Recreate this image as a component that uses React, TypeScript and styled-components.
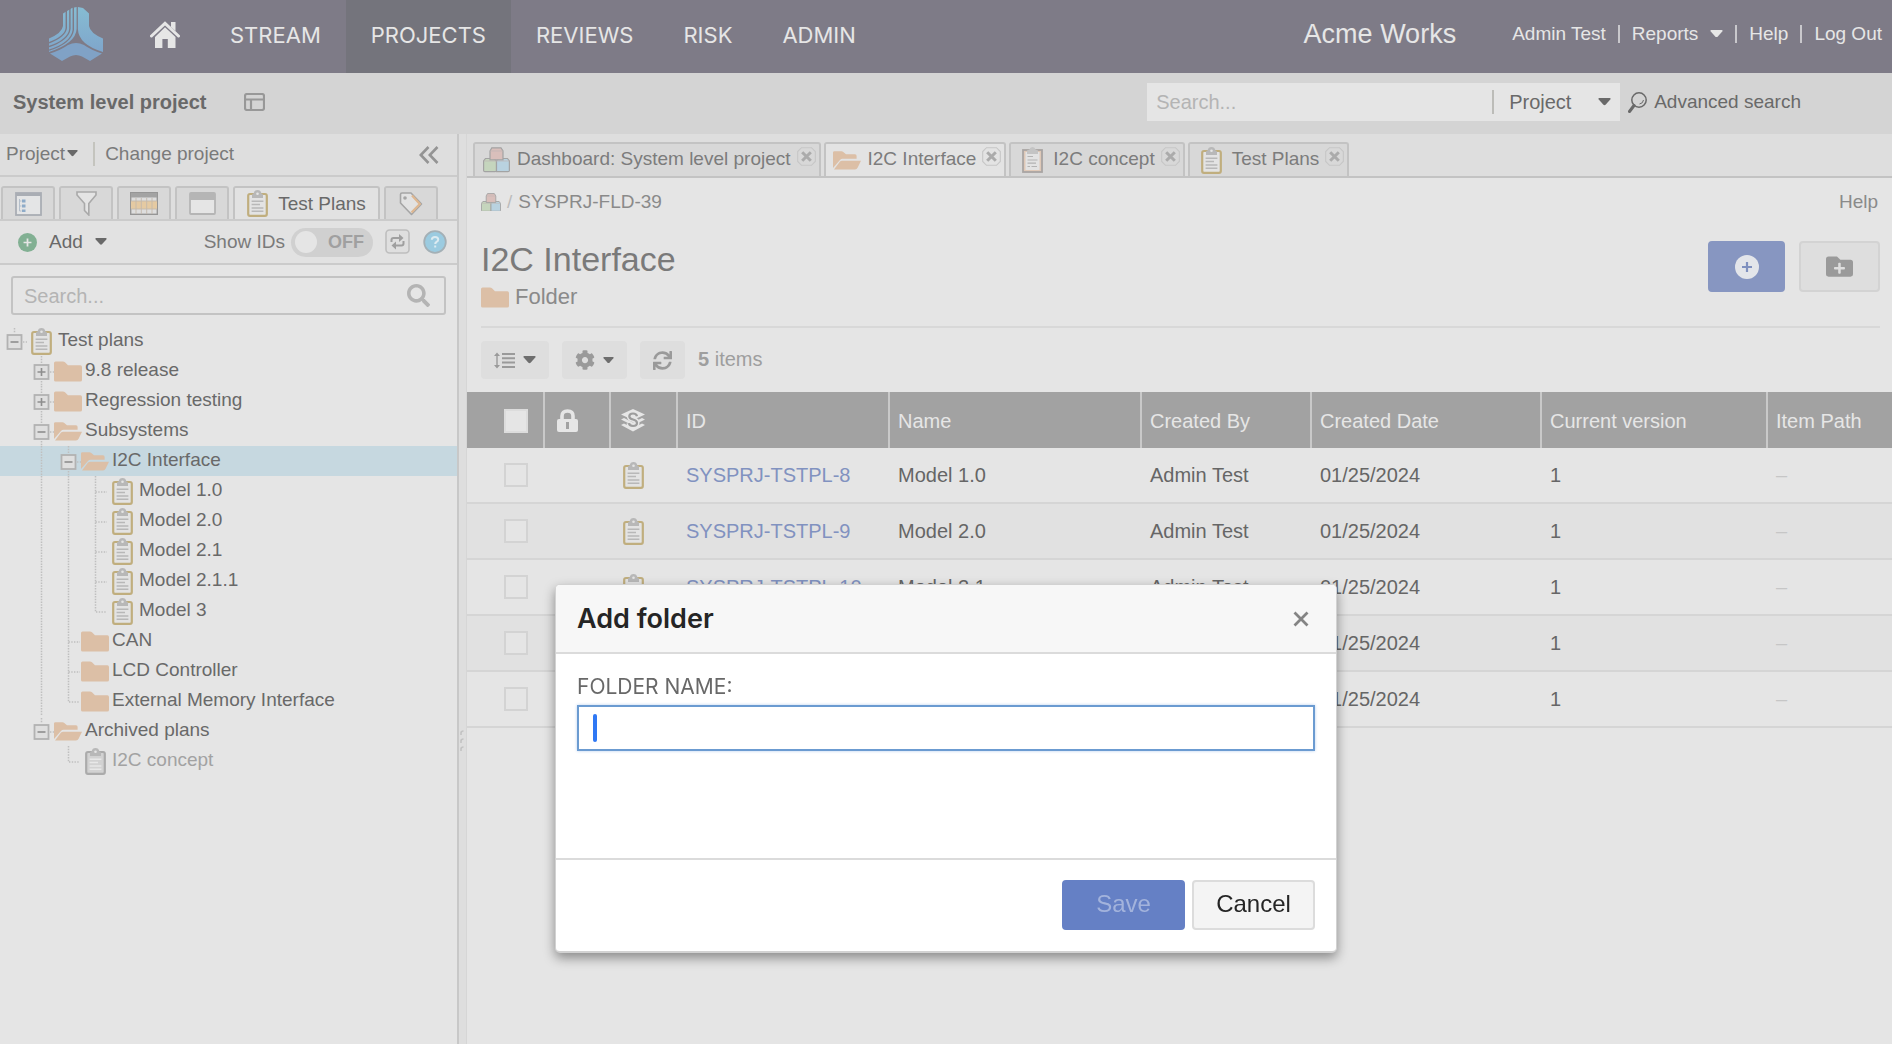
import React from "react";
import styled, { createGlobalStyle, css } from "styled-components";
import { FaCog, FaSearch, FaSync, FaFolderPlus } from "react-icons/fa";

const color = {
  header: "#7e7b87",
  headerActive: "#74747c",
  headerText: "#e6e6e6",
  bar: "#d4d4d4",
  strip: "#dedede",
  page: "#e5e5e5",
  tab: "#d8d8d8",
  line: "#cbcbcb",
  tabLine: "#c3c3c3",
  text: "#696969",
  muted: "#8a8a8a",
  faint: "#b4b4b4",
  selected: "#c6d8e0",
  folder: "#dcbfa6",
  clip: "#c0ae7e",
  blue: "#8796c1",
};

const sans = `"Liberation Sans", Arial, sans-serif`;
const inter = `Inter, "Liberation Sans", sans-serif`;

const GlobalStyle = createGlobalStyle`
  *, *::before, *::after { box-sizing: border-box; }
  body {
    margin: 0;
    background: ${color.page};
    color: ${color.text};
    font-family: ${sans};
    font-size: 19px;
    line-height: 24px;
  }
  button, input, select { font: inherit; color: inherit; margin: 0; padding: 0; border: 0; border-radius: 0; background: none; outline: none; }
  a { color: inherit; text-decoration: none; }
  ul { list-style: none; margin: 0; padding: 0; }
  h1, h2, p { margin: 0; }
  svg { display: block; flex: none; }
`;

/* ---------- icons ---------- */

const Caret = ({ size = 13, fill = color.text }: { size?: number; fill?: string }) => (
  <svg width={size} height={size * 0.6} viewBox="0 0 13 8" aria-hidden>
    <path d="M1.2 0H11.8Q13.4.3 12.4 1.6L7.6 7Q6.5 8 5.4 7L.6 1.6Q-.4.3 1.2 0Z" fill={fill} />
  </svg>
);

const Logo = () => (
  <svg width="54" height="54" viewBox="0 0 54 54" aria-hidden>
    <defs>
      <linearGradient id="logoLeft" x1="0" y1="0" x2="0" y2="1">
        <stop offset="0" stopColor="#86bcd3" />
        <stop offset="1" stopColor="#7fa6cb" />
      </linearGradient>
    </defs>
    <path d="M27.6 0 23 1 14 6.500V19Q13 26 0 31.500V45Q27 36 27.600 22Z" fill="url(#logoLeft)" />
    <g fill="none" stroke={color.header} strokeWidth="1.400">
      <path d="M17.300 3V21Q16.500 29.500 0 35.800" />
      <path d="M20.900 1V22Q19.500 33 0 39.600" />
      <path d="M24.300 0V23Q22.500 36 0 43.200" />
    </g>
    <path d="M28.900 0 34 1 40 6.500V19Q41 26 54 31.500V45Q29.500 37.500 28.900 22Z" fill="url(#logoLeft)" />
    <path d="M1 46.500Q12 43 19 38Q27 34 35 38Q42 43 53 46.500L41 54 33 49.500Q27 46.500 21 49.500L13 54Z" fill="#80a2c6" />
  </svg>
);

const HomeIcon = () => (
  <svg width="30" height="27" viewBox="0 0 30 27" aria-hidden>
    <path d="M21 1H25.500V10L21 6Z" fill={color.headerText} />
    <path d="M1.500 15 15 2.300 28.500 15" fill="none" stroke={color.headerText} strokeWidth="3" strokeLinecap="round" />
    <path d="M15 6.300 25.500 16V27H17.800V18H12.400V27H5V16Z" fill={color.headerText} />
  </svg>
);

const LayoutIcon = () => (
  <svg width="21" height="18" viewBox="0 0 21 18" fill="none" stroke="#989898" strokeWidth="2.200" aria-hidden>
    <rect x="1" y="1" width="19" height="16" rx="2" />
    <path d="M1 6.500H20M7 6.500V17" />
  </svg>
);

const LensIcon = () => (
  <svg width="19" height="21" viewBox="0 0 19 21" fill="none" stroke={color.text} aria-hidden>
    <circle cx="11" cy="8" r="7.200" strokeWidth="1.500" />
    <path d="M11.500 12Q15 11.500 15.500 8" strokeWidth="1" />
    <path d="M6 13.500 1.500 19.500" strokeWidth="3" strokeLinecap="round" />
  </svg>
);

const CollapseIcon = () => (
  <svg width="20" height="18" viewBox="0 0 20 18" fill="none" stroke="#949494" strokeWidth="2.600" aria-hidden>
    <path d="M9.500 1 1.800 9 9.500 17M18.500 1 10.800 9 18.500 17" />
  </svg>
);

const CubesIcon = ({ width = 27 }: { width?: number }) => (
  <svg width={width} height={width * 0.94} viewBox="0 0 27 25.400" stroke="#a3a3a3" strokeWidth="1.200" aria-hidden>
    <path d="M.6 14 2.500 11.500H11L13.500 14V23.500Q13.500 24.700 12 24.700H2Q.6 24.700.6 23.500Z" fill="#c5d5bd" />
    <path d="M13.500 14 15.500 11.500H24.500L26.400 14V23.500Q26.400 24.700 25 24.700H13.500Z" fill="#b9d2e0" />
    <path d="M7 4 8.800.8H18L20 4V12.800H7Z" fill="#d9bfbb" />
    <path d="M7 4H20M1 14H26" stroke="#bdb5b3" strokeWidth=".7" fill="none" />
  </svg>
);

const ClipboardIcon = ({ edge = color.clip, paper = "#e3e3e3", ink = "#b8b8b8" }: { edge?: string; paper?: string; ink?: string }) => (
  <svg width="21" height="27" viewBox="0 0 21 27" aria-hidden>
    <rect x="1.200" y="4" width="18.600" height="21.800" rx="1.800" fill={paper} stroke={edge} strokeWidth="2.200" />
    <path d="M5 8V5Q5 3.400 6.600 3.400Q7.300 0 10.500 0Q13.700 0 14.400 3.400Q16 3.400 16 5V8Z" fill="#b8b8b8" />
    <circle cx="10.500" cy="3.800" r="1.300" fill={color.page} />
    <path d="M4.600 11.200H16.400M4.600 14.500H13M4.600 18H16.400M4.600 21.300H16.400" stroke={ink} strokeWidth="1.500" />
  </svg>
);

const PagedClipboardIcon = () => (
  <svg width="21" height="26" viewBox="0 0 21 26" aria-hidden>
    <rect x="1" y="3" width="19" height="22" fill="#dfc9b8" stroke="#a9a5a3" strokeWidth="1.800" />
    <rect x="3.500" y="5" width="14" height="18" fill="#e3e3e3" />
    <path d="M5 7V3.500L7.500 2.500Q8 0 10.500 0Q13 0 13.500 2.500L16 3.500V7Z" fill="#c4c4c4" />
    <path d="M5.500 9.500H11M5.500 13H15.500M5.500 16.200H14M5.500 19.500H8M9.500 19.500H15" stroke="#b3b3b3" strokeWidth="1.200" />
  </svg>
);

const FolderIcon = () => (
  <svg width="28" height="21" viewBox="0 0 28 21" aria-hidden>
    <path d="M0 2Q0 .4 1.600.4H9Q10 .4 11 1.300L14 4.200H26.300Q28 4.200 28 6V19Q28 20.600 26.300 20.600H1.600Q0 20.600 0 19Z" fill={color.folder} />
  </svg>
);

const OpenFolderIcon = () => (
  <svg width="28" height="19" viewBox="0 0 28 19" fill={color.folder} aria-hidden>
    <path d="M0 1.600Q0 .2 1.500.2H8.500Q9.500.2 10.300 1L13 3.300H22Q23.600 3.300 23.600 5V7.700H9.500Q8 7.700 7 9L0 17Z" />
    <path d="M9 9.700H28L24.600 16.800Q23.800 18.600 22 18.600H1L7 10.600Q8 9.700 9 9.700Z" />
  </svg>
);

const TreeTabIcon = () => (
  <svg width="27" height="24" viewBox="0 0 27 24" aria-hidden>
    <rect x="1" y="1" width="25" height="22" fill="#e4e5e6" stroke="#a9adb4" strokeWidth="1.800" />
    <rect x="1" y="1" width="25" height="3" fill="#a9adb4" />
    <path d="M4.500 7V19M4.500 9H6.500M4.500 14H6.500M4.500 19H6.500" stroke="#b4bfcb" fill="none" />
    <path d="M7 7.500H10.500V10.500H7ZM7 12.500H10.500V15.500H7ZM7 17.500H10.500V20H7Z" fill="#8eabc8" />
  </svg>
);

const FunnelIcon = () => (
  <svg width="21" height="25" viewBox="0 0 21 25" fill="#e4e4e4" stroke="#a9a9a9" strokeWidth="1.600" aria-hidden>
    <path d="M1 1H20V4L12.800 12.500V24L8.500 19.500V12.500L1 4Z" />
  </svg>
);

const GridTabIcon = () => (
  <svg width="28" height="23" viewBox="0 0 28 23" aria-hidden>
    <rect x=".7" y=".7" width="26.600" height="21.600" fill="#dedede" stroke="#969696" strokeWidth="1.400" />
    <rect x="1" y="1" width="26" height="4.500" fill="#a3a3a3" />
    <rect x="1" y="9" width="26" height="8" fill="#e5caa2" />
    <path d="M6 6V22M11.300 6V22M16.700 6V22M22 6V22M1 9H27M1 17H27" stroke="#c3b9ad" strokeWidth=".9" />
  </svg>
);

const WindowTabIcon = () => (
  <svg width="27" height="23" viewBox="0 0 27 23" aria-hidden>
    <rect x="1" y="1" width="25" height="21" rx="1" fill="#e5e5e5" stroke="#b5b5b5" strokeWidth="1.800" />
    <rect x="1" y="1" width="25" height="7" fill="#b5b5b5" />
  </svg>
);

const TagIcon = () => (
  <svg width="24" height="24" viewBox="0 0 24 24" aria-hidden>
    <path d="M1.500 2.500Q1.500 1 3 1H12L22.500 12 12.500 22.500 1.500 11Z" fill="#e2e2e2" stroke="#a5a5a5" strokeWidth="1.600" strokeLinejoin="round" />
    <path d="M13 3.500 20.800 12 12.500 20.500" fill="none" stroke="#deb791" strokeWidth="2.200" />
    <circle cx="6" cy="6" r="1.800" fill="#a5a5a5" />
  </svg>
);

const PlusDisc = ({ size, fill, plus }: { size: number; fill: string; plus: string }) => (
  <svg width={size} height={size} viewBox="0 0 24 24" aria-hidden>
    <circle cx="12" cy="12" r="12" fill={fill} />
    <path d="M12 7V17M7 12H17" stroke={plus} strokeWidth="2.200" />
  </svg>
);

const SwapIcon = () => (
  <svg width="25" height="26" viewBox="0 0 25 26" aria-hidden>
    <rect x="1" y="1" width="23" height="23" rx="3.500" fill="#dfdfdf" stroke="#bebebe" strokeWidth="1.600" />
    <path d="M6.500 13V11Q6.500 9 8.500 9H15M18.500 12V14.500Q18.500 16.500 16.500 16.500H10" fill="none" stroke="#9f9f9f" strokeWidth="2" />
    <path d="M14 5 18.500 9 14 13ZM11 12.500 6.500 16.500 11 20.500Z" fill="#9f9f9f" />
  </svg>
);

const HelpDisc = () => (
  <svg width="24" height="24" viewBox="0 0 24 24" aria-hidden>
    <circle cx="12" cy="12" r="10.800" fill="#9bcbe0" stroke="#a4b0b6" strokeWidth="1.800" />
    <path d="M8.800 9.800Q9 7 12 7Q15.200 7 15.200 9.500Q15.200 11 13.500 12Q12.200 12.700 12.200 14M12.200 15.500V17.500" fill="none" stroke="#dcebf1" strokeWidth="2" />
  </svg>
);

const CloseIcon = () => (
  <svg width="19" height="19" viewBox="0 0 19 19" fill="none" aria-hidden>
    <path d="M4.500.7H14.500L18.300 4.500V14.500L14.500 18.300H4.500L.7 14.500V4.500Z" stroke="#c6c6c6" strokeWidth="1.100" />
    <path d="M5.200 5.200 13.800 13.800M13.800 5.200 5.200 13.800" stroke="#ababab" strokeWidth="3" />
  </svg>
);

const DensityIcon = () => (
  <svg width="21" height="17" viewBox="0 0 21 17" aria-hidden>
    <path d="M3 2V15" stroke="#9a9a9a" strokeWidth="1.400" />
    <path d="M0 4 3 .5 6 4ZM0 13 3 16.500 6 13Z" fill="#9a9a9a" />
    <path d="M8 2H21M8 6.300H21M8 10.600H21M8 15H21" stroke="#9a9a9a" strokeWidth="2" />
  </svg>
);

const LockIcon = () => (
  <svg width="21" height="24" viewBox="0 0 21 24" aria-hidden>
    <path d="M5 11V7Q5 2 10.500 2Q16 2 16 7V11" fill="none" stroke={color.headerText} strokeWidth="3.600" />
    <rect y="10" width="21" height="13" rx="2" fill={color.headerText} />
    <path d="M10.500 13V20" stroke="#a2a2a2" strokeWidth="3" />
  </svg>
);

const StackIcon = () => (
  <svg width="26" height="24" viewBox="0 0 26 24" aria-hidden>
    <path d="M13 1 25 6.500 13 12 1 6.500Z" fill={color.headerText} />
    <path d="M1 11.500 4 10 13 14.500 22 10 25 11.500 13 17.500ZM1 17 4 15.500 13 20 22 15.500 25 17 13 23.500Z" fill={color.headerText} />
    <path d="M17 8.200Q16.500 5.500 13 5.500Q9.300 5.500 9.300 8.300Q9.300 10.800 13 11.500Q17 12.300 17 15Q17 18 13 18Q9.200 18 9 15.200" fill="none" stroke={color.headerText} strokeWidth="5" />
    <path d="M17 8.200Q16.500 5.500 13 5.500Q9.300 5.500 9.300 8.300Q9.300 10.800 13 11.500Q17 12.300 17 15Q17 18 13 18Q9.200 18 9 15.200" fill="none" stroke="#9c9c9c" strokeWidth="2.200" />
  </svg>
);

const DismissIcon = () => (
  <svg width="16" height="16" viewBox="0 0 16 16" fill="none" stroke="#848484" strokeWidth="2.800" aria-hidden>
    <path d="M1.500 1.500 14.500 14.500M14.500 1.500 1.500 14.500" />
  </svg>
);

const GripIcon = () => (
  <svg width="5" height="22" viewBox="0 0 5 22" fill="none" stroke="#c2c2c2" strokeWidth="1.600" aria-hidden>
    <path d="M1 5V3Q1 1 3.500 1M1 13V11Q1 9 3.500 9M1 21V19Q1 17 3.500 17" />
  </svg>
);

/* ---------- top navigation ---------- */

const Header = styled.header`
  display: flex;
  align-items: stretch;
  height: 73px;
  padding-right: 10px;
  background: ${color.header};
  color: ${color.headerText};
`;

const Brand = styled.a`
  display: flex;
  align-items: center;
  padding: 0 22px 5px 49px;
`;

const Nav = styled.nav`
  display: flex;
  flex: 1;
`;

const NavLink = styled.a<{ $active?: boolean }>`
  display: flex;
  align-items: center;
  padding: 0 25px 4px;
  font-family: ${inter};
  font-size: 22px;
  background: ${(p) => (p.$active ? color.headerActive : "transparent")};
`;

const Account = styled.div`
  display: flex;
  align-items: center;
  padding-bottom: 6px;
`;

const OrgName = styled.span`
  margin-right: 56px;
  font-size: 27px;
`;

const AccountItem = styled.a`
  display: flex;
  align-items: center;
  gap: 12px;

  & + &::before {
    content: "";
    width: 2px;
    height: 18px;
    margin-left: 12px;
    background: #c9c8cc;
  }
`;

/* ---------- project bar ---------- */

const ProjectBar = styled.div`
  display: flex;
  align-items: center;
  height: 61px;
  padding: 0 91px 3px 13px;
  background: ${color.bar};
`;

const ProjectTitle = styled.h1`
  margin-right: 38px;
  font-size: 20px;
`;

const GlobalSearch = styled.form`
  display: flex;
  align-items: center;
  width: 473px;
  height: 38px;
  margin: 0 8px 0 auto;
  padding: 0 9px;
  background: ${color.page};
  font-size: 20px;
`;

const searchText = css`
  flex: 1;
  min-width: 0;
  font-size: 20px;
  &::placeholder { color: ${color.faint}; opacity: 1; }
`;

const SearchInput = styled.input`
  ${searchText}
`;

const Scope = styled.label`
  display: flex;
  align-items: center;
  width: 119px;
  padding-left: 15px;
  border-left: 2px solid #bcbcb8;
`;

const ScopeSelect = styled.select`
  flex: 1;
  appearance: none;
  line-height: 24px;
`;

const AdvancedLink = styled.a`
  display: flex;
  align-items: center;
  gap: 7px;
`;

/* ---------- workspace ---------- */

const Page = styled.div`
  display: flex;
  flex-direction: column;
  min-height: 100vh;
`;

const Workspace = styled.div`
  display: flex;
  flex: 1;
`;

const Sidebar = styled.aside`
  width: 459px;
  flex: none;
  border-right: 2px solid #c8c8c8;
`;

const Splitter = styled.div`
  display: flex;
  align-items: center;
  width: 8px;
  flex: none;
  padding: 303px 0 0 1px;
  background: ${color.strip};
  border-right: 1px solid #d6d6d6;
`;

const ProjectMenu = styled.div`
  display: flex;
  align-items: center;
  height: 43px;
  padding: 0 18px 2px 6px;
  background: ${color.strip};
  border-bottom: 2px solid ${color.line};
  color: #7a7a7a;
`;

const ProjectMenuButton = styled.button`
  display: flex;
  align-items: center;
  gap: 2px;
  padding-right: 15px;
  margin-right: 10px;
  border-right: 2px solid #c4c4be;
`;

const CollapseButton = styled.button`
  margin-left: auto;
  padding-top: 3px;
`;

const SideTabs = styled.div`
  display: flex;
  gap: 4px;
  height: 44px;
  padding: 9px 0 0 1px;
  background: ${color.strip};
  border-bottom: 2px solid ${color.line};
`;

const SideTab = styled.button<{ $active?: boolean }>`
  display: flex;
  align-items: center;
  justify-content: center;
  gap: 10px;
  width: ${(p) => (p.$active ? 147 : 54)}px;
  background: ${(p) => (p.$active ? "#e2e2e2" : color.tab)};
  border: 2px solid ${color.tabLine};
  border-bottom: 0;
  border-radius: 3px 3px 0 0;
`;

const SideTools = styled.div`
  display: flex;
  align-items: center;
  height: 44px;
  padding: 0 10px 0 18px;
  background: #e2e2e2;
  border-bottom: 2px solid ${color.line};
`;

const AddButton = styled.button`
  display: flex;
  align-items: center;
  gap: 12px;
  margin-right: auto;
`;

const IdSwitch = styled.label`
  display: flex;
  align-items: center;
  gap: 6px;
  margin-right: 12px;
  color: #7a7a7a;
`;

const SwitchTrack = styled.span`
  display: flex;
  align-items: center;
  gap: 11px;
  width: 82px;
  height: 29px;
  padding: 4px;
  border-radius: 15px;
  background: #d0d0d0;
  color: #a0a0a0;
  font-size: 18px;
  font-weight: bold;
`;

const SwitchKnob = styled.input`
  appearance: none;
  width: 22px;
  height: 22px;
  border-radius: 50%;
  background: ${color.page};
`;

const IconButton = styled.button`
  display: flex;
  margin-right: 13px;

  &:last-child { margin-right: 0; }
`;

const TreeSearch = styled.form`
  display: flex;
  align-items: center;
  height: 39px;
  margin: 11px 11px 11px;
  padding: 0 14px 0 11px;
  border: 2px solid #c3c3c3;
  border-radius: 3px;
  color: #b4b4b4;
`;

const TreeList = styled.ul``;

const TreeRow = styled.li<{ $selected?: boolean; $dim?: boolean }>`
  display: flex;
  align-items: center;
  height: 30px;
  background: ${(p) => (p.$selected ? color.selected : "transparent")};
  color: ${(p) => (p.$dim ? "#a2a2a2" : color.text)};
`;

const TreeIcon = styled.span`
  display: flex;
  justify-content: center;
  width: 28px;
`;

const TreeLabel = styled.a`
  padding: 0 0 3px 3px;
`;

type GuideKind = "none" | "line" | "tee" | "elbow" | "plus" | "minus" | "minusEnd";

const Guide = ({ kind }: { kind: GuideKind }) => {
  const box = kind === "plus" || kind === "minus" || kind === "minusEnd";
  const vertical: Partial<Record<GuideKind, string>> = {
    line: "M13.500 0V30",
    tee: "M13.500 0V30M13.500 16H25",
    elbow: "M13.500 0V16H25",
    plus: "M13.500 0V7M13.500 25V30M22 16H26",
    minus: "M13.500 0V7M13.500 25V30M22 16H26",
    minusEnd: "M13.500 2V7M22 16H26",
  };
  return (
    <svg width="27" height="30" viewBox="-1 0 27 30" fill="none" aria-hidden>
      <path d={vertical[kind]} stroke="#bfbfbf" strokeWidth="1.500" strokeDasharray="1.400 1.350" />
      {box && <rect x="6.500" y="9" width="14" height="14" fill="#dfdfdf" stroke="#b2b2b2" strokeWidth="1.800" />}
      {box && <path d={kind === "plus" ? "M9.500 16H17.500M13.500 12V20" : "M9.500 16H17.500"} stroke="#8e8e8e" strokeWidth="1.600" />}
    </svg>
  );
};

type TreeNode = {
  label: string;
  icon: "clip" | "folder" | "open" | "dim";
  guides: GuideKind[];
};

const tree: TreeNode[] = [
  { label: "Test plans", icon: "clip", guides: ["minusEnd"] },
  { label: "9.8 release", icon: "folder", guides: ["none", "plus"] },
  { label: "Regression testing", icon: "folder", guides: ["none", "plus"] },
  { label: "Subsystems", icon: "open", guides: ["none", "minus"] },
  { label: "I2C Interface", icon: "open", guides: ["none", "line", "minus"] },
  { label: "Model 1.0", icon: "clip", guides: ["none", "line", "line", "tee"] },
  { label: "Model 2.0", icon: "clip", guides: ["none", "line", "line", "tee"] },
  { label: "Model 2.1", icon: "clip", guides: ["none", "line", "line", "tee"] },
  { label: "Model 2.1.1", icon: "clip", guides: ["none", "line", "line", "tee"] },
  { label: "Model 3", icon: "clip", guides: ["none", "line", "line", "elbow"] },
  { label: "CAN", icon: "folder", guides: ["none", "line", "tee"] },
  { label: "LCD Controller", icon: "folder", guides: ["none", "line", "tee"] },
  { label: "External Memory Interface", icon: "folder", guides: ["none", "line", "elbow"] },
  { label: "Archived plans", icon: "open", guides: ["none", "minusEnd"] },
  { label: "I2C concept", icon: "dim", guides: ["none", "none", "elbow"] },
];

const treeIcons = {
  clip: <ClipboardIcon />,
  folder: <FolderIcon />,
  open: <OpenFolderIcon />,
  dim: <ClipboardIcon edge="#ababab" paper="#d2d2d2" ink="#e8e8e8" />,
};

/* ---------- main panel ---------- */

const Main = styled.main`
  flex: 1;
  min-width: 0;
`;

const DocTabs = styled.div`
  display: flex;
  gap: 3px;
  height: 44px;
  padding: 8px 0 0 6px;
  background: ${color.strip};
  border-bottom: 2px solid ${color.tabLine};
`;

const DocTab = styled.div<{ $active?: boolean }>`
  display: flex;
  align-items: center;
  padding: 0 3px 3px 8px;
  background: ${(p) => (p.$active ? "#e3e3e3" : color.tab)};
  border: 2px solid ${color.tabLine};
  border-bottom: 0;
  border-radius: 3px 3px 0 0;
  color: #7c7c7c;
`;

const DocTabIcon = styled.span`
  display: flex;
  justify-content: center;
  width: 27px;
  margin-right: 7px;
  padding-top: 3px;
`;

const DocTabClose = styled.button`
  margin-left: 6px;
  padding-bottom: 4px;
`;

const Crumbs = styled.div`
  display: flex;
  align-items: center;
  gap: 6px;
  padding: 12px 14px 0;
  color: ${color.muted};
`;

const CrumbSlash = styled.span`
  color: #bcbcbc;
`;

const HelpLink = styled.a`
  margin-left: auto;
`;

const TitleBlock = styled.div`
  display: flex;
  justify-content: space-between;
  align-items: flex-start;
  height: 114px;
  margin: 0 12px 0 14px;
  padding-top: 27px;
  border-bottom: 2px solid #d8d8d8;
`;

const ItemTitle = styled.h2`
  font-size: 34px;
  line-height: 36px;
  font-weight: normal;
  color: #7a7a7a;
`;

const ItemType = styled.p`
  display: flex;
  align-items: center;
  gap: 6px;
  margin-top: 6px;
  font-size: 22px;
  line-height: 28px;
  color: ${color.muted};
`;

const TitleActions = styled.div`
  display: flex;
  gap: 14px;
`;

const ActionButton = styled.button<{ $primary?: boolean }>`
  display: flex;
  align-items: center;
  justify-content: center;
  width: ${(p) => (p.$primary ? 77 : 81)}px;
  height: 51px;
  border: 2px solid ${(p) => (p.$primary ? color.blue : "#d3d3d3")};
  border-radius: 4px;
  background: ${(p) => (p.$primary ? color.blue : color.strip)};
  color: #9a9a9a;
`;

const ListTools = styled.div`
  display: flex;
  align-items: center;
  gap: 13px;
  padding: 13px 14px;
  color: #9e9e9e;
  font-size: 20px;
`;

const ToolButton = styled.button`
  display: flex;
  align-items: center;
  gap: 8px;
  height: 38px;
  padding: 0 13px;
  border-radius: 4px;
  background: ${color.strip};
  color: #9a9a9a;
`;

const ItemCount = styled.span`
  padding-bottom: 2px;
`;

const ItemTable = styled.table`
  width: 100%;
  table-layout: fixed;
  border-collapse: separate;
  border-spacing: 0;
  font-size: 20px;
`;

const HeadCell = styled.th<{ $width?: number }>`
  width: ${(p) => (p.$width ? `${p.$width}px` : "auto")};
  height: 56px;
  padding: 2px 0 0 8px;
  background: #a2a2a2;
  border-right: 2px solid #c9c9c9;
  color: ${color.headerText};
  font-weight: normal;
  text-align: left;
  white-space: nowrap;

  &:last-child { border-right: 0; }
`;

const Cell = styled.td<{ $faint?: boolean }>`
  height: 56px;
  padding: 0 0 0 8px;
  border-bottom: 2px solid #d5d5d5;
  color: ${(p) => (p.$faint ? "#c6c6c6" : "#666")};

  tr:nth-child(even) > & { background: #e1e1e1; }
`;

const CellIcon = styled.span`
  display: flex;
  padding-left: 4px;
`;

const HeadIcon = styled.span`
  display: flex;
  padding: 0 0 2px 1px;
`;

const CellLink = styled.a`
  color: #8192c0;
`;

const Tick = styled.input<{ $solid?: boolean }>`
  display: block;
  appearance: none;
  width: 24px;
  height: 24px;
  margin-left: 29px;
  border: 2px solid ${(p) => (p.$solid ? "#dcdcdc" : "#d3d3d3")};
  background: ${color.page};
`;

const rows = [
  ["SYSPRJ-TSTPL-8", "Model 1.0"],
  ["SYSPRJ-TSTPL-9", "Model 2.0"],
  ["SYSPRJ-TSTPL-10", "Model 2.1"],
  ["SYSPRJ-TSTPL-11", "Model 2.1.1"],
  ["SYSPRJ-TSTPL-12", "Model 3"],
];

/* ---------- dialog ---------- */

const Overlay = styled.div`
  position: fixed;
  inset: 0;
  display: flex;
  align-items: flex-start;
  justify-content: center;
  padding-top: 584px;
`;

const Dialog = styled.section`
  width: 782px;
  border: 1px solid #d2d2d2;
  border-bottom: 2px solid #d2d2d2;
  border-radius: 5px;
  background: #fff;
  box-shadow: 0 5px 12px rgba(0, 0, 0, 0.4);
  overflow: hidden;
`;

const DialogHeader = styled.header`
  display: flex;
  align-items: center;
  justify-content: space-between;
  height: 69px;
  padding: 0 27px 0 21px;
  background: #f7f7f7;
  border-bottom: 2px solid #dbdbdb;
`;

const DialogTitle = styled.h2`
  font-family: ${inter};
  font-size: 27px;
  line-height: 32px;
  font-weight: 600;
  color: #252525;
`;

const DialogBody = styled.div`
  min-height: 204px;
  padding: 19px 21px 0;
`;

const FieldLabel = styled.label`
  display: block;
  margin-bottom: 4px;
  font-family: ${inter};
  font-size: 21px;
  line-height: 28px;
  color: #686868;
`;

const Field = styled.div`
  position: relative;
`;

const FieldInput = styled.input`
  display: block;
  width: 100%;
  height: 46px;
  padding: 0 14px;
  border: 2px solid #6b9bd1;
  background: #fff;
  box-shadow: 0 0 3px #b7d0ee;
  caret-color: transparent;
  color: #252525;
`;

const TextCursor = styled.span`
  position: absolute;
  left: 16px;
  top: 9px;
  width: 4px;
  height: 28px;
  border-radius: 2px;
  background: #2f78f4;
  pointer-events: none;
`;

const DialogFooter = styled.footer`
  display: flex;
  justify-content: flex-end;
  gap: 7px;
  padding: 20px 21px 21px;
  border-top: 2px solid #dbdbdb;
`;

const DialogButton = styled.button<{ $primary?: boolean }>`
  width: 123px;
  height: 50px;
  padding-bottom: 2px;
  border: 2px solid ${(p) => (p.$primary ? "#6580c5" : "#dcdcdc")};
  border-radius: 4px;
  background: ${(p) => (p.$primary ? "#6580c5" : "#f4f4f4")};
  color: ${(p) => (p.$primary ? "#a3b3dc" : "#252525")};
  font-size: 24px;
`;

export default function App() {
  return (
    <Page>
      <GlobalStyle />
      <Header>
        <Brand href="#" aria-label="Dashboard"><Logo /></Brand>
        <Nav>
          <NavLink href="#" aria-label="Home"><HomeIcon /></NavLink>
          <NavLink href="#">STREAM</NavLink>
          <NavLink href="#" $active>PROJECTS</NavLink>
          <NavLink href="#">REVIEWS</NavLink>
          <NavLink href="#">RISK</NavLink>
          <NavLink href="#">ADMIN</NavLink>
        </Nav>
        <Account>
          <OrgName>Acme Works</OrgName>
          <AccountItem href="#">Admin Test</AccountItem>
          <AccountItem href="#">Reports <Caret fill={color.headerText} /></AccountItem>
          <AccountItem href="#">Help</AccountItem>
          <AccountItem href="#">Log Out</AccountItem>
        </Account>
      </Header>

      <ProjectBar>
        <ProjectTitle>System level project</ProjectTitle>
        <IconButton aria-label="Project layout"><LayoutIcon /></IconButton>
        <GlobalSearch>
          <SearchInput type="text" placeholder="Search..." aria-label="Search" />
          <Scope>
            <ScopeSelect aria-label="Search scope"><option>Project</option></ScopeSelect>
            <Caret />
          </Scope>
        </GlobalSearch>
        <AdvancedLink href="#"><LensIcon />Advanced search</AdvancedLink>
      </ProjectBar>

      <Workspace>
        <Sidebar>
          <ProjectMenu>
            <ProjectMenuButton>Project<Caret size={11} /></ProjectMenuButton>
            <a href="#">Change project</a>
            <CollapseButton aria-label="Collapse panel"><CollapseIcon /></CollapseButton>
          </ProjectMenu>
          <SideTabs>
            <SideTab aria-label="Explorer"><TreeTabIcon /></SideTab>
            <SideTab aria-label="Filters"><FunnelIcon /></SideTab>
            <SideTab aria-label="Releases"><GridTabIcon /></SideTab>
            <SideTab aria-label="Reports"><WindowTabIcon /></SideTab>
            <SideTab $active><ClipboardIcon />Test Plans</SideTab>
            <SideTab aria-label="Tags"><TagIcon /></SideTab>
          </SideTabs>
          <SideTools>
            <AddButton>
              <PlusDisc size={19} fill="#82b093" plus="#e6e6e6" />Add<Caret size={12} />
            </AddButton>
            <IdSwitch>
              Show IDs
              <SwitchTrack><SwitchKnob type="checkbox" />OFF</SwitchTrack>
            </IdSwitch>
            <IconButton aria-label="Sync tree"><SwapIcon /></IconButton>
            <IconButton aria-label="Help"><HelpDisc /></IconButton>
          </SideTools>
          <TreeSearch>
            <SearchInput type="text" placeholder="Search..." aria-label="Search test plans" />
            <FaSearch size={23} />
          </TreeSearch>
          <TreeList>
            {tree.map((node) => (
              <TreeRow key={node.label} $selected={node.label === "I2C Interface"} $dim={node.icon === "dim"}>
                {node.guides.map((kind, i) => <Guide key={i} kind={kind} />)}
                <TreeIcon>{treeIcons[node.icon]}</TreeIcon>
                <TreeLabel href="#">{node.label}</TreeLabel>
              </TreeRow>
            ))}
          </TreeList>
        </Sidebar>
        <Splitter><GripIcon /></Splitter>

        <Main>
          <DocTabs>
            <DocTab>
              <DocTabIcon><CubesIcon /></DocTabIcon>Dashboard: System level project
              <DocTabClose aria-label="Close Dashboard"><CloseIcon /></DocTabClose>
            </DocTab>
            <DocTab $active>
              <DocTabIcon><OpenFolderIcon /></DocTabIcon>I2C Interface
              <DocTabClose aria-label="Close I2C Interface"><CloseIcon /></DocTabClose>
            </DocTab>
            <DocTab>
              <DocTabIcon><PagedClipboardIcon /></DocTabIcon>I2C concept
              <DocTabClose aria-label="Close I2C concept"><CloseIcon /></DocTabClose>
            </DocTab>
            <DocTab>
              <DocTabIcon><ClipboardIcon /></DocTabIcon>Test Plans
              <DocTabClose aria-label="Close Test Plans"><CloseIcon /></DocTabClose>
            </DocTab>
          </DocTabs>

          <Crumbs>
            <CubesIcon width={20} />
            <CrumbSlash>/</CrumbSlash>
            <a href="#">SYSPRJ-FLD-39</a>
            <HelpLink href="#">Help</HelpLink>
          </Crumbs>

          <TitleBlock>
            <div>
              <ItemTitle>I2C Interface</ItemTitle>
              <ItemType><FolderIcon />Folder</ItemType>
            </div>
            <TitleActions>
              <ActionButton $primary aria-label="Add item">
                <PlusDisc size={24} fill="#e3e5ea" plus="#7f90bf" />
              </ActionButton>
              <ActionButton aria-label="Add folder"><FaFolderPlus size={27} /></ActionButton>
            </TitleActions>
          </TitleBlock>

          <ListTools>
            <ToolButton aria-label="Row density"><DensityIcon /><Caret fill="#6e6e6e" /></ToolButton>
            <ToolButton aria-label="Settings"><FaCog size={20} /><Caret size={11} fill="#6e6e6e" /></ToolButton>
            <ToolButton aria-label="Refresh"><FaSync size={19} /></ToolButton>
            <ItemCount><b>5</b> items</ItemCount>
          </ListTools>

          <ItemTable>
            <thead>
              <tr>
                <HeadCell $width={78}><Tick $solid type="checkbox" aria-label="Select all" /></HeadCell>
                <HeadCell $width={66}><CellIcon><LockIcon /></CellIcon></HeadCell>
                <HeadCell $width={67}><HeadIcon><StackIcon /></HeadIcon></HeadCell>
                <HeadCell $width={212}>ID</HeadCell>
                <HeadCell $width={252}>Name</HeadCell>
                <HeadCell $width={170}>Created By</HeadCell>
                <HeadCell $width={230}>Created Date</HeadCell>
                <HeadCell $width={226}>Current version</HeadCell>
                <HeadCell>Item Path</HeadCell>
              </tr>
            </thead>
            <tbody>
              {rows.map(([id, name]) => (
                <tr key={id}>
                  <Cell><Tick type="checkbox" aria-label={`Select ${id}`} /></Cell>
                  <Cell />
                  <Cell><CellIcon><ClipboardIcon /></CellIcon></Cell>
                  <Cell><CellLink href="#">{id}</CellLink></Cell>
                  <Cell>{name}</Cell>
                  <Cell>Admin Test</Cell>
                  <Cell>01/25/2024</Cell>
                  <Cell>1</Cell>
                  <Cell $faint>–</Cell>
                </tr>
              ))}
            </tbody>
          </ItemTable>
        </Main>
      </Workspace>

      <Overlay>
        <Dialog role="dialog" aria-modal="true" aria-labelledby="add-folder-title">
          <DialogHeader>
            <DialogTitle id="add-folder-title">Add folder</DialogTitle>
            <button aria-label="Close"><DismissIcon /></button>
          </DialogHeader>
          <DialogBody>
            <FieldLabel htmlFor="folder-name">FOLDER NAME:</FieldLabel>
            <Field>
              <FieldInput id="folder-name" type="text" />
              <TextCursor />
            </Field>
          </DialogBody>
          <DialogFooter>
            <DialogButton $primary>Save</DialogButton>
            <DialogButton>Cancel</DialogButton>
          </DialogFooter>
        </Dialog>
      </Overlay>
    </Page>
  );
}
